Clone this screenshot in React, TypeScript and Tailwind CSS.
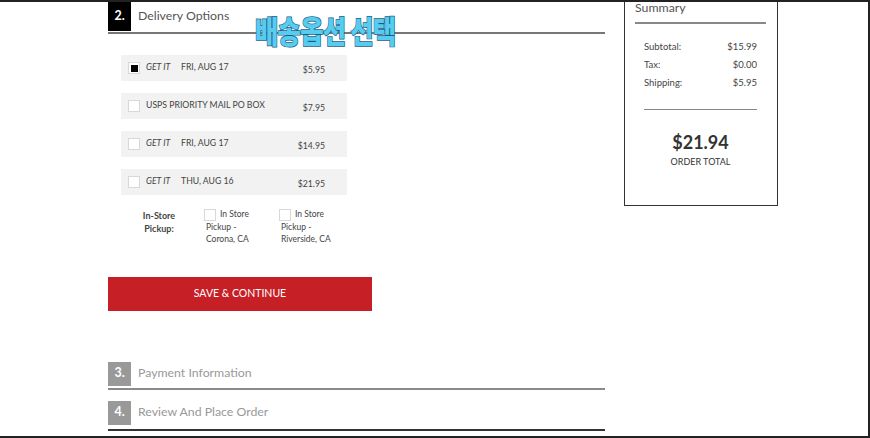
const font = { fontFamily: 'Lato, "Open Sans", sans-serif' }

interface ShipOption {
  getIt: boolean
  label: string
  price: string
  checked?: boolean
}

const options: ShipOption[] = [
  { getIt: true, label: 'FRI, AUG 17', price: '$5.95', checked: true },
  { getIt: false, label: 'USPS PRIORITY MAIL PO BOX', price: '$7.95' },
  { getIt: true, label: 'FRI, AUG 17', price: '$14.95' },
  { getIt: true, label: 'THU, AUG 16', price: '$21.95' },
]

function Box({ checked }: { checked?: boolean }) {
  return (
    <span className="w-[12px] h-[12px] shrink-0 bg-white border border-[#d8d8d8] flex items-center justify-center">
      {checked && <span className="w-[7px] h-[7px] bg-black" />}
    </span>
  )
}

function StepHeader({ n, title, dark }: { n: string; title: string; dark?: boolean }) {
  return (
    <div className={`flex items-center border-b-2 ${dark ? 'h-[30px] border-[#333]' : 'h-[28px] border-[#8a8a8a]'}`}>
      <div className="w-[23px] h-[24px] self-start flex items-center justify-center text-[12.5px] font-bold text-white bg-[#999]">
        {n}
      </div>
      <span className={`ml-[7px] text-[12.3px] text-[#999] ${dark ? '-mt-[5px]' : '-mt-[3px]'}`}>{title}</span>
    </div>
  )
}

function Row({ label, value }: { label: string; value: string }) {
  return (
    <div className="flex justify-between text-[9.5px] text-[#444] h-[18px] items-center">
      <span>{label}</span>
      <span>{value}</span>
    </div>
  )
}

export default function App() {
  return (
    <div style={font} className="relative w-[870px] h-[438px] bg-white border-t-2 border-r-2 border-b-2 border-[#222] flex overflow-hidden">
      <div className="ml-[108px] w-[497px] flex flex-col">
        <div className="flex items-center h-[32px] border-b-2 border-[#777]">
          <div className="w-[23px] h-[29px] self-start bg-black flex items-center justify-center text-[12.5px] font-bold text-white">2.</div>
          <span className="ml-[7px] text-[12.3px] text-[#555] -mt-[2px]">Delivery Options</span>
        </div>

        <div className="mt-[21px] ml-[13px] flex flex-col gap-[12px]">
          {options.map((o, i) => (
            <div key={i} className="w-[226px] h-[26px] bg-[#f2f2f2] flex items-center pl-[7px] pr-[22px]">
              <Box checked={o.checked} />
              <div className="ml-[6px] flex items-center text-[8.7px] text-[#444] -mt-[2px]">
                {o.getIt && <span className="italic w-[35px]">GET IT</span>}
                <span>{o.label}</span>
              </div>
              <span className="ml-auto text-[8.7px] text-[#444] mt-[4px]">{o.price}</span>
            </div>
          ))}
        </div>

        <div className="mt-[13px] flex text-[8.5px] text-[#444] leading-[12.5px]">
          <div className="ml-[33px] w-[36px] text-center font-bold text-[9px] leading-[13px] mt-[1px]">In-Store<br />Pickup:</div>
          <div className="ml-[27px] w-[75px]">
            <div className="flex items-end gap-[4px]"><Box /><span>In Store</span></div>
            <div className="ml-[2px]">Pickup -<br />Corona, CA</div>
          </div>
          <div className="w-[75px]">
            <div className="flex items-end gap-[4px]"><Box /><span>In Store</span></div>
            <div className="ml-[2px]">Pickup -<br />Riverside, CA</div>
          </div>
        </div>

        <button className="mt-[31px] w-[264px] h-[34px] bg-[#c62026] text-white text-[10.5px] flex items-center justify-center">
          SAVE &amp; CONTINUE
        </button>

        <div className="mt-[51px]">
          <StepHeader n="3." title="Payment Information" />
        </div>
        <div className="mt-[11px]">
          <StepHeader n="4." title="Review And Place Order" dark />
        </div>
      </div>

      <div className="ml-[19px] w-[154px] h-[206px] -mt-[2px] border-l border-r border-b border-[#333] flex flex-col px-[10px]">
        <div className="text-[12.3px] leading-[15px] text-[#555] h-[24px] border-b-2 border-[#888] w-[131px]">Summary</div>
        <div className="mx-[9px] mt-[14px] w-[113px]">
          <Row label="Subtotal:" value="$15.99" />
          <Row label="Tax:" value="$0.00" />
          <Row label="Shipping:" value="$5.95" />
          <div className="mt-[17px] border-t border-[#888]" />
        </div>
        <div className="mt-[23px] text-center w-[131px] text-[18px] font-bold text-[#333] leading-none">$21.94</div>
        <div className="mt-[4px] text-center w-[131px] text-[9px] text-[#333]">ORDER TOTAL</div>
      </div>

      <div
        style={{ fontFamily: '"Noto Sans CJK KR", sans-serif' }}
        className="absolute left-[255px] top-[5px] origin-left scale-x-[0.82] text-[31px] font-black text-[#56cdee] [-webkit-text-stroke:1.4px_#1d5a86] [paint-order:stroke_fill] tracking-[-1px]"
      >
        배송옵션 선택
      </div>
    </div>
  )
}
